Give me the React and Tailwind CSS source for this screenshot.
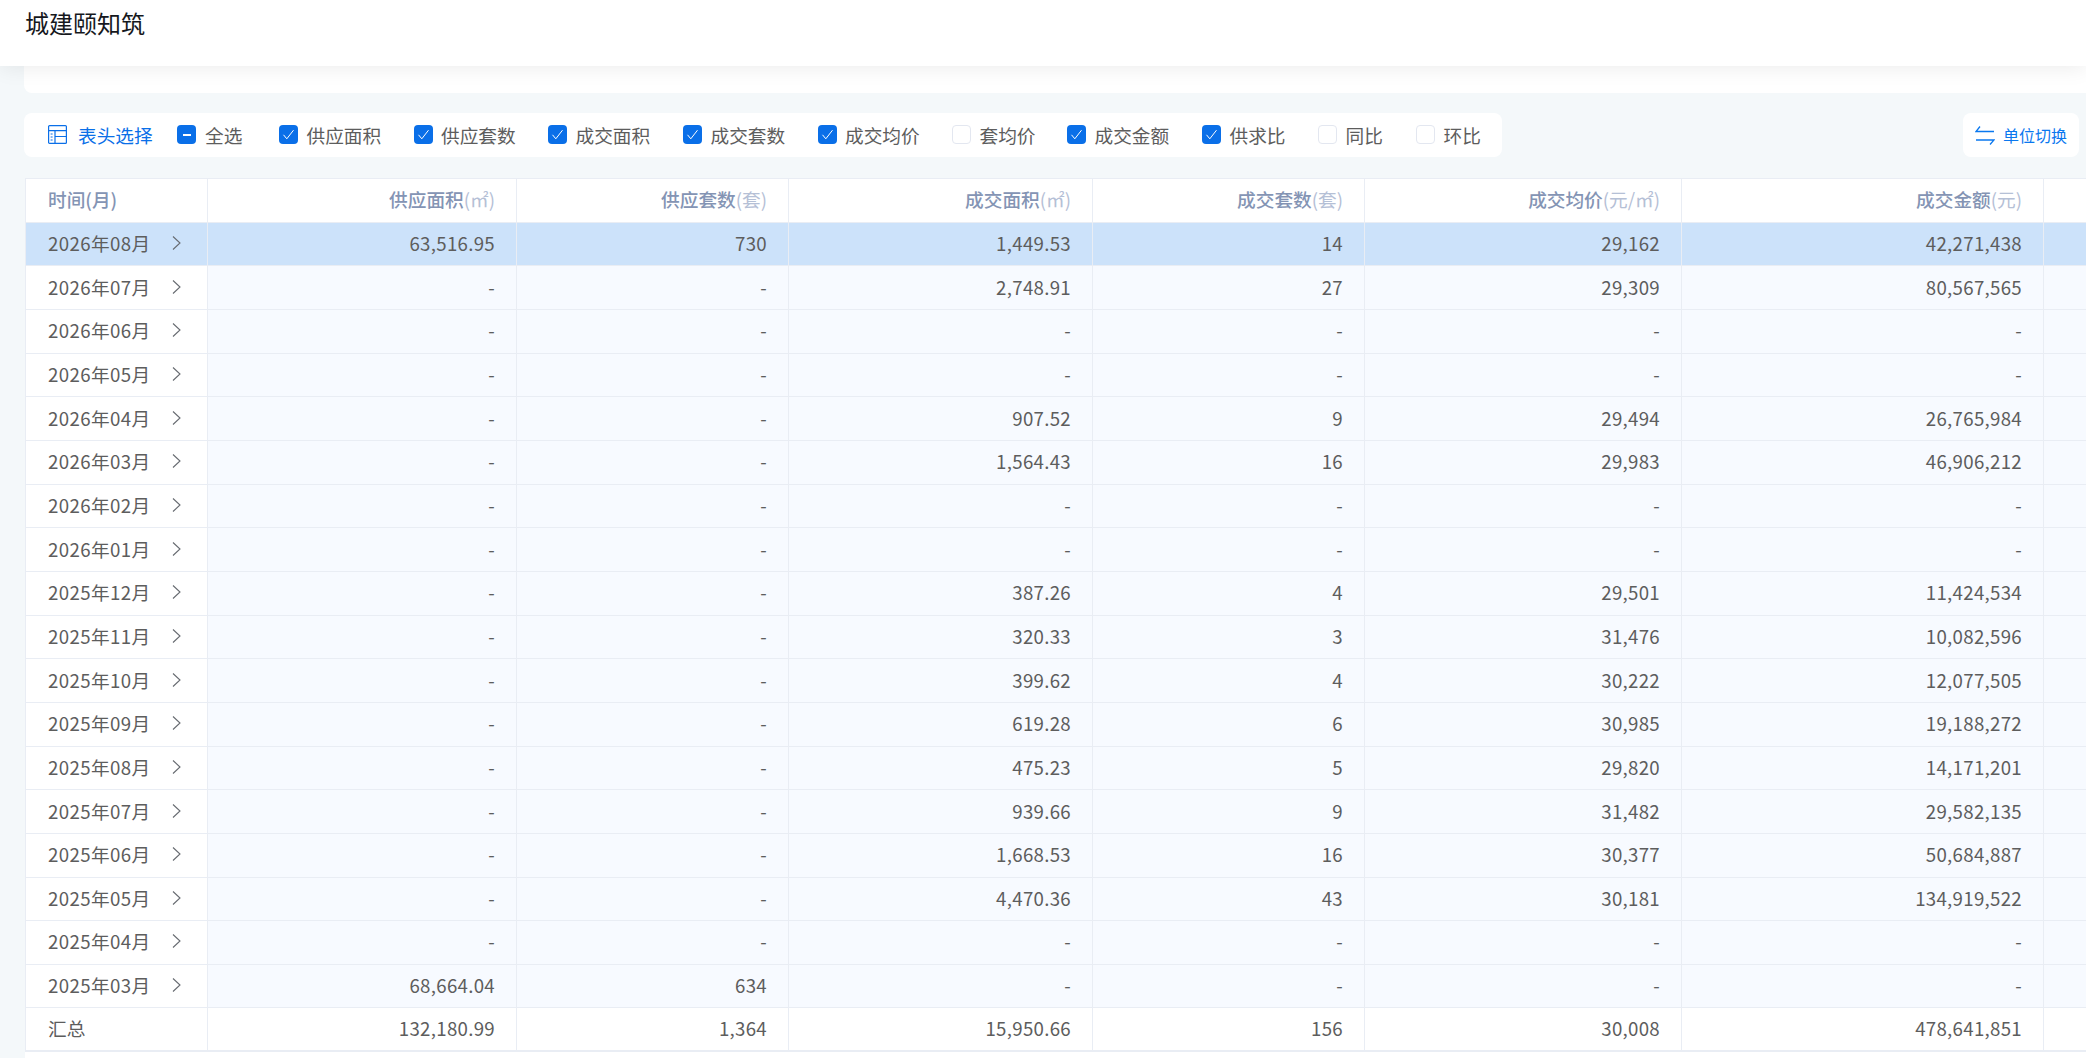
import React from 'react';

const cols = 'grid grid-cols-[182px_309px_272px_304px_272px_317px_362px_1fr]';

const options = [
  { label: '供应面积', on: true, w: 'w-[134.5px]' },
  { label: '供应套数', on: true, w: 'w-[134.5px]' },
  { label: '成交面积', on: true, w: 'w-[135px]' },
  { label: '成交套数', on: true, w: 'w-[134.5px]' },
  { label: '成交均价', on: true, w: 'w-[134.5px]' },
  { label: '套均价', on: false, w: 'w-[115px]' },
  { label: '成交金额', on: true, w: 'w-[135px]' },
  { label: '供求比', on: true, w: 'w-[116px]' },
  { label: '同比', on: false, w: 'w-[98px]' },
  { label: '环比', on: false, w: 'w-auto' },
];

const heads = [
  ['供应面积', '(㎡)'],
  ['供应套数', '(套)'],
  ['成交面积', '(㎡)'],
  ['成交套数', '(套)'],
  ['成交均价', '(元/㎡)'],
  ['成交金额', '(元)'],
];

const rows = [
  ['2026年08月', '63,516.95', '730', '1,449.53', '14', '29,162', '42,271,438'],
  ['2026年07月', '-', '-', '2,748.91', '27', '29,309', '80,567,565'],
  ['2026年06月', '-', '-', '-', '-', '-', '-'],
  ['2026年05月', '-', '-', '-', '-', '-', '-'],
  ['2026年04月', '-', '-', '907.52', '9', '29,494', '26,765,984'],
  ['2026年03月', '-', '-', '1,564.43', '16', '29,983', '46,906,212'],
  ['2026年02月', '-', '-', '-', '-', '-', '-'],
  ['2026年01月', '-', '-', '-', '-', '-', '-'],
  ['2025年12月', '-', '-', '387.26', '4', '29,501', '11,424,534'],
  ['2025年11月', '-', '-', '320.33', '3', '31,476', '10,082,596'],
  ['2025年10月', '-', '-', '399.62', '4', '30,222', '12,077,505'],
  ['2025年09月', '-', '-', '619.28', '6', '30,985', '19,188,272'],
  ['2025年08月', '-', '-', '475.23', '5', '29,820', '14,171,201'],
  ['2025年07月', '-', '-', '939.66', '9', '31,482', '29,582,135'],
  ['2025年06月', '-', '-', '1,668.53', '16', '30,377', '50,684,887'],
  ['2025年05月', '-', '-', '4,470.36', '43', '30,181', '134,919,522'],
  ['2025年04月', '-', '-', '-', '-', '-', '-'],
  ['2025年03月', '68,664.04', '634', '-', '-', '-', '-'],
];

const total = ['汇总', '132,180.99', '1,364', '15,950.66', '156', '30,008', '478,641,851'];

const Check = ({ on }) => (
  <span
    className={
      on
        ? 'flex h-[19px] w-[19px] shrink-0 items-center justify-center rounded-[4px] bg-[#0a6fe8]'
        : 'h-[19px] w-[19px] shrink-0 rounded-[4px] border border-[#e3e7f0] bg-white'
    }
  >
    {on && (
      <svg width="13" height="13" viewBox="0 0 13 13" fill="none" stroke="#fff" strokeWidth="1">
        <path d="M1.500 6.800 4.800 10.800 11.500 2.200" />
      </svg>
    )}
  </span>
);

const TableIcon = () => (
  <svg width="19" height="19" viewBox="0 0 19 19" fill="none" stroke="#0a6fe8" strokeWidth="1.2" className="shrink-0">
    <rect x="0.6" y="0.6" width="17.8" height="17.8" rx="1" />
    <path d="M0.6 5.6H18.4M7 5.6V18.4M7 11.5H18.4" />
    <path d="M2.6 9H4.6M2.6 12H4.6M2.6 15H4.6" />
  </svg>
);

const SwapIcon = () => (
  <svg width="20" height="19" viewBox="0 0 20 19" fill="none" stroke="#0a78ef" strokeWidth="1.3" className="shrink-0">
    <path d="M5 0.500 1 5.500H19M15 18.500 19 14H1" />
  </svg>
);

const Chevron = () => (
  <svg width="9" height="16" viewBox="0 0 9 16" fill="none" stroke="#666a70" strokeWidth="1.1" className="shrink-0">
    <path d="M1 1.500 8 8 1 14.500" />
  </svg>
);

const DataRow = ({ row, selected }) => (
  <div className={`${cols} h-[43.67px] ${selected ? 'bg-[#cce2fa]' : 'bg-[#f7faff]'}`}>
    <div className={`flex items-center justify-between border-r border-b border-[#e9edf4] pb-[2px] pl-[22px] pr-[26px] ${selected ? 'bg-[#cce2fa]' : 'bg-white'}`}>
      <span className="tracking-[0.4px]">{row[0]}</span>
      <Chevron />
    </div>
    {row.slice(1).map((v, i) => (
      <div key={i} className="flex items-center justify-end border-r border-b border-[#e9edf4] pb-[2px] pr-[21px] tracking-[0.3px]">
        {v}
      </div>
    ))}
    <div className="border-b border-[#e9edf4]" />
  </div>
);

export default function App() {
  return (
    <div className="flex h-[1058px] w-[2086px] flex-col overflow-hidden bg-[#f4f8fa] font-['Noto_Sans_CJK_SC','Noto_Sans',sans-serif] text-[18.67px] text-[#5d5d5d]">
      <header className="relative z-10 h-[66px] shrink-0 bg-white px-[25px] pt-[5px] text-[24px] leading-[36px] text-[#16181d] shadow-[0_2px_20px_rgba(0,0,0,0.08)]">
        城建颐知筑
      </header>

      <div className="ml-6 h-[27px] shrink-0 rounded-bl-[8px] bg-white" />

      <div className="mt-5 flex shrink-0 items-start justify-between pl-6 pr-[7px]">
        <div className="flex h-11 w-[1478px] items-center rounded-[8px] bg-white pb-[1px] pl-6">
          <TableIcon />
          <span className="ml-[11px] w-[99px] text-[#0a6fe8]">表头选择</span>
          <div className="flex w-[102px] items-center gap-[9px]">
            <span className="flex h-[19px] w-[19px] shrink-0 items-center justify-center rounded-[4px] bg-[#0a6fe8]">
              <span className="h-[2px] w-[8px] bg-white" />
            </span>
            全选
          </div>
          {options.map((o) => (
            <div key={o.label} className={`flex items-center gap-[8.5px] ${o.w}`}>
              <Check on={o.on} />
              {o.label}
            </div>
          ))}
        </div>
        <div className="flex h-11 w-[116px] items-center justify-center gap-[8px] rounded-[8px] bg-white text-[16px] text-[#0a78ef]">
          <SwapIcon />
          单位切换
        </div>
      </div>

      <div className="mt-[21px] ml-[25px] flex-1 bg-white">
        <div className="border-t border-l border-[#e9edf4]">
          <div className={`${cols} h-[43.67px] bg-white font-medium text-[#8494b4]`}>
            <div className="flex items-center border-r border-b border-[#e9edf4] pb-[2px] pl-[22px]">时间(月)</div>
            {heads.map(([name, unit]) => (
              <div key={name} className="flex items-center justify-end border-r border-b border-[#e9edf4] pb-[2px] pr-[21px]">
                {name}
                <span className="font-normal text-[#b5c0d6]">{unit}</span>
              </div>
            ))}
            <div className="border-b border-[#e9edf4]" />
          </div>
          {rows.map((r, i) => (
            <DataRow key={r[0]} row={r} selected={i === 0} />
          ))}
          <div className={`${cols} h-[44px] border-b border-[#e9edf4] bg-white`}>
            <div className="flex items-center border-r border-b border-[#e9edf4] pb-[2px] pl-[22px]">{total[0]}</div>
            {total.slice(1).map((v, i) => (
              <div key={i} className="flex items-center justify-end border-r border-b border-[#e9edf4] pb-[2px] pr-[21px] tracking-[0.3px]">
                {v}
              </div>
            ))}
            <div className="border-b border-[#e9edf4]" />
          </div>
        </div>
      </div>
    </div>
  );
}
